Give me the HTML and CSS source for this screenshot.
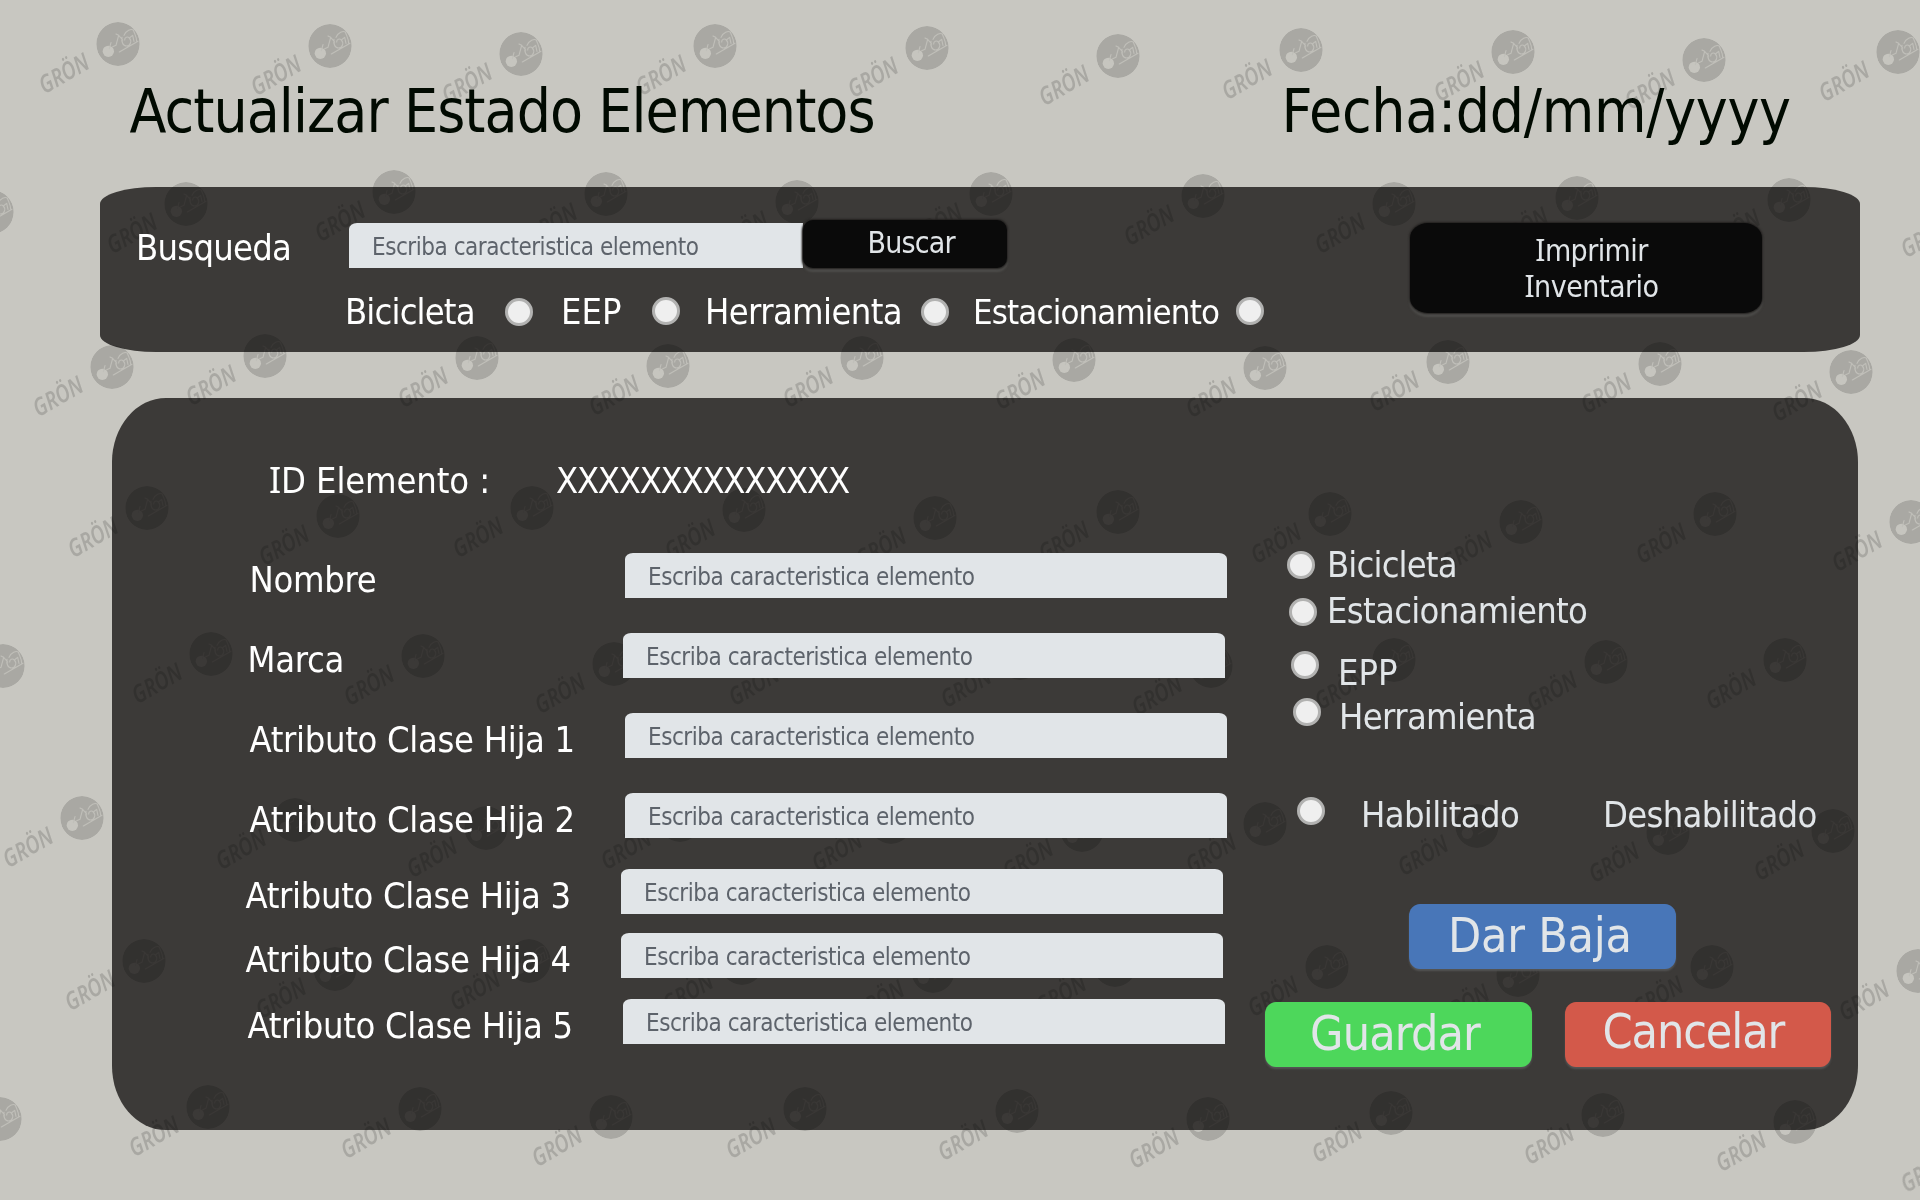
FILE: index.html
```
<!DOCTYPE html>
<html lang="es">
<head>
<meta charset="utf-8">
<title>Actualizar Estado Elementos</title>
<link rel="stylesheet" href="styles.css">
</head>
<body>
<div class="page">

  <svg class="watermark" width="1920" height="1200" viewBox="0 0 1920 1200" aria-hidden="true">
    <defs>
      <mask id="bike" maskUnits="userSpaceOnUse" x="-24" y="-24" width="48" height="48">
        <ellipse rx="21.7" ry="22" fill="#fff"/>
        <g transform="scale(.333)" fill="none" stroke="#444" stroke-width="3.4" stroke-linecap="round" stroke-linejoin="round">
          <circle cx="-29" cy="22" r="17" fill="#111" stroke="none"/>
          <path d="M-26 14L-21-4M-16 8L-6 4L2-26L-6-30M2-26L14-12M12-20C10-8 14 6 26 6C38 6 42-10 34-18C28-24 20-20 20-12M18-26C24-42 40-46 46-42M46-42C50-30 56-22 56-8M34-18L44-26L48-8M4 24L60-8"/>
        </g>
      </mask>
      <g id="mark">
        <g mask="url(#bike)"><ellipse rx="21.7" ry="22"/></g>
        <text class="mark-name" transform="translate(-73.5 50.5) rotate(-30) skewX(-2)" textLength="54" lengthAdjust="spacingAndGlyphs">GRÖN</text>
      </g>
    </defs>
    <g class="marks">
      <use href="#mark" x="118" y="44"/><use href="#mark" x="330" y="46"/><use href="#mark" x="521" y="54"/><use href="#mark" x="715" y="46"/><use href="#mark" x="927" y="48"/><use href="#mark" x="1118" y="56"/><use href="#mark" x="1301" y="50"/><use href="#mark" x="1513" y="52"/><use href="#mark" x="1704" y="60"/><use href="#mark" x="1898" y="52"/>
      <use href="#mark" x="-8" y="212"/><use href="#mark" x="186" y="204"/><use href="#mark" x="394" y="192"/><use href="#mark" x="606" y="194"/><use href="#mark" x="797" y="202"/><use href="#mark" x="991" y="194"/><use href="#mark" x="1203" y="196"/><use href="#mark" x="1394" y="204"/><use href="#mark" x="1577" y="198"/><use href="#mark" x="1789" y="200"/><use href="#mark" x="1980" y="208"/>
      <use href="#mark" x="112" y="367"/><use href="#mark" x="265" y="356"/><use href="#mark" x="477" y="358"/><use href="#mark" x="668" y="366"/><use href="#mark" x="862" y="358"/><use href="#mark" x="1074" y="360"/><use href="#mark" x="1265" y="368"/><use href="#mark" x="1448" y="362"/><use href="#mark" x="1660" y="364"/><use href="#mark" x="1851" y="372"/>
      <use href="#mark" x="147" y="508"/><use href="#mark" x="338" y="516"/><use href="#mark" x="532" y="508"/><use href="#mark" x="744" y="510"/><use href="#mark" x="935" y="518"/><use href="#mark" x="1118" y="512"/><use href="#mark" x="1330" y="514"/><use href="#mark" x="1521" y="522"/><use href="#mark" x="1715" y="514"/><use href="#mark" x="1911" y="522"/>
      <use href="#mark" x="3" y="666"/><use href="#mark" x="211" y="654"/><use href="#mark" x="423" y="656"/><use href="#mark" x="614" y="664"/><use href="#mark" x="808" y="656"/><use href="#mark" x="1020" y="658"/><use href="#mark" x="1211" y="666"/><use href="#mark" x="1394" y="660"/><use href="#mark" x="1606" y="662"/><use href="#mark" x="1785" y="660"/>
      <use href="#mark" x="82" y="818"/><use href="#mark" x="295" y="820"/><use href="#mark" x="486" y="828"/><use href="#mark" x="680" y="820"/><use href="#mark" x="891" y="822"/><use href="#mark" x="1082" y="830"/><use href="#mark" x="1265" y="824"/><use href="#mark" x="1477" y="826"/><use href="#mark" x="1668" y="833"/><use href="#mark" x="1833" y="831"/>
      <use href="#mark" x="144" y="961"/><use href="#mark" x="335" y="969"/><use href="#mark" x="529" y="961"/><use href="#mark" x="742" y="963"/><use href="#mark" x="933" y="971"/><use href="#mark" x="1115" y="965"/><use href="#mark" x="1327" y="967"/><use href="#mark" x="1518" y="975"/><use href="#mark" x="1712" y="967"/><use href="#mark" x="1918" y="971"/>
      <use href="#mark" x="0" y="1119"/><use href="#mark" x="208" y="1107"/><use href="#mark" x="420" y="1109"/><use href="#mark" x="611" y="1117"/><use href="#mark" x="805" y="1109"/><use href="#mark" x="1017" y="1111"/><use href="#mark" x="1208" y="1119"/><use href="#mark" x="1391" y="1113"/><use href="#mark" x="1603" y="1115"/><use href="#mark" x="1795" y="1122"/><use href="#mark" x="1980" y="1143"/>
    </g>
  </svg>

  <header class="header">
    <h1 class="heading title">Actualizar Estado Elementos</h1>
    <div class="heading date">Fecha:dd/mm/yyyy</div>
  </header>

  <section class="panel search">
    <div class="label search-label">Busqueda</div>
    <div class="search-main">
      <div class="search-bar">
        <div class="field search-field">Escriba caracteristica elemento</div>
        <div class="dark-button find">Buscar</div>
      </div>
      <div class="filters">
        <span class="label bicicleta">Bicicleta</span><span class="radio low"></span>
        <span class="label eep">EEP</span><span class="radio"></span>
        <span class="label herramienta">Herramienta</span><span class="radio low"></span>
        <span class="label small-label">Estacionamiento</span><span class="radio"></span>
      </div>
    </div>
    <div class="dark-button print"><span class="imprimir"><span class="slab">I</span>mprimir</span><span class="inventario"><span class="slab">I</span>nventario</span></div>
  </section>

  <section class="panel editor">
    <div class="form">
      <div class="id-row">
        <span class="label id-label"><span class="slab">I</span>D Elemento :</span>
        <span class="label id-value">XXXXXXXXXXXXXX</span>
      </div>
      <div class="row offset-4"><span class="label nombre">Nombre</span><div class="field">Escriba caracteristica elemento</div></div>
      <div class="row offset-2 gap-35"><span class="label nombre">Marca</span><div class="field">Escriba caracteristica elemento</div></div>
      <div class="row offset-4 gap-35"><span class="label atributo">Atributo Clase Hija 1</span><div class="field">Escriba caracteristica elemento</div></div>
      <div class="row offset-4 gap-35"><span class="label atributo">Atributo Clase Hija 2</span><div class="field">Escriba caracteristica elemento</div></div>
      <div class="row gap-31"><span class="label atributo">Atributo Clase Hija 3</span><div class="field">Escriba caracteristica elemento</div></div>
      <div class="row gap-19"><span class="label atributo">Atributo Clase Hija 4</span><div class="field">Escriba caracteristica elemento</div></div>
      <div class="row offset-2 gap-21"><span class="label atributo">Atributo Clase Hija 5</span><div class="field">Escriba caracteristica elemento</div></div>
    </div>

    <div class="side">
      <div class="option option-bicicleta"><span class="radio"></span><span class="label bicicleta">Bicicleta</span></div>
      <div class="option option-estacionamiento"><span class="radio"></span><span class="label estacionamiento">Estacionamiento</span></div>
      <div class="option option-epp"><span class="radio"></span><span class="label eep">EPP</span></div>
      <div class="option option-herramienta"><span class="radio"></span><span class="label herramienta">Herramienta</span></div>
      <div class="option option-estado"><span class="radio"></span><span class="label habilitado">Habilitado</span><span class="label deshabilitado">Deshabilitado</span></div>
      <div class="button baja">Dar Baja</div>
      <div class="actions">
        <div class="button guardar">Guardar</div>
        <div class="button cancelar">Cancelar</div>
      </div>
    </div>
  </section>
</div>
</body>
</html>
```
FILE: styles.css
```
* { box-sizing: border-box; }

body {
  margin: 0;
  background: #c8c7c1;
  font-family: "DejaVu Sans Condensed", "DejaVu Sans", sans-serif;
  font-stretch: condensed;
}

.page {
  position: relative;
  width: 1920px;
  height: 1200px;
  overflow: hidden;
}

/* The watermark lies over the panels but under their controls. */
.watermark { position: absolute; inset: 0; z-index: 1; }
.marks { fill: #000; opacity: .155; }
.mark-name { font: italic 600 24.5px "Noto Sans", sans-serif; }

.header {
  position: relative;
  z-index: 2;
  display: flex;
  height: 187px;
  padding: 76px 0 0 129.5px;
}
.heading {
  margin: 0;
  font-size: 60px;
  font-weight: 400;
  line-height: 70px;
  color: #010a01;
  white-space: nowrap;
}
.title { width: 1152px; letter-spacing: -.93px; }
.date { letter-spacing: -.3px; }

.panel { display: flex; align-items: flex-start; background: #3c3a38; }
.panel > * { position: relative; z-index: 2; }

.search {
  width: 1760px;
  height: 165px;
  margin-left: 100px;
  padding-left: 36px;
  border-radius: 56px / 17px;
}
.search-label { width: 209px; margin-top: 40px; letter-spacing: -.75px; }
.search-main { width: 1065px; padding-top: 33px; }
.search-bar { display: flex; height: 71px; padding-left: 4px; }

.label {
  height: 40px;
  font-size: 36px;
  line-height: 42px;
  color: #fff;
  white-space: nowrap;
}
.slab { font-family: "Noto Sans", sans-serif; line-height: 1; }

.field {
  width: 601.5px;
  height: 45px;
  padding: 2px 0 0 23px;
  border-radius: 8px 8px 0 0 / 6px 6px 0 0;
  background: #e1e5e8;
  font-size: 24px;
  line-height: 45px;
  letter-spacing: -.47px;
  color: #5d636b;
  white-space: nowrap;
}
.search-field { width: 454px; margin-top: 3px; border-top-right-radius: 0; }

.dark-button {
  background: #0a0a0a;
  box-shadow: 0 0 2px 1px #22201f, 0 3px 2px 1px #4e4d4b;
  color: #e1e5e8;
  font-size: 30px;
  line-height: 36px;
}
.find {
  width: 204px;
  height: 48px;
  padding: 5px 0 0 64.5px;
  border-radius: 10px;
  letter-spacing: -.8px;
}
.print {
  display: flex;
  flex-direction: column;
  align-items: center;
  width: 352px;
  height: 90px;
  margin-top: 36px;
  padding: 10px 0 0 11px;
  border-radius: 18px / 15px;
}
.imprimir { letter-spacing: -.6px; }
.inventario { letter-spacing: -.5px; }

.filters { display: grid; grid-template-columns: 160px 56px 91px 53px 216px 52px 263px 28px; }
.bicicleta { letter-spacing: -.85px; }
.herramienta { letter-spacing: -.6px; }
.eep { letter-spacing: 0; }
.estacionamiento { letter-spacing: -.68px; }
.small-label { font-size: 34.5px; letter-spacing: -.87px; }

.radio {
  flex: none;
  width: 28px;
  height: 28px;
  margin-top: 6px;
  border: 3.5px solid #b2b2b1;
  border-radius: 50%;
  background: #efefef;
}
.radio.low { margin-top: 7px; }

.editor {
  width: 1746px;
  height: 732px;
  margin: 46px 0 0 112px;
  border-radius: 54px / 64px;
}
.form { width: 1153px; padding: 62px 0 0 133px; }
.id-row { display: flex; height: 93px; padding-left: 24px; }
.id-label { width: 287px; letter-spacing: -.12px; }
.id-value { letter-spacing: -1.27px; }

.row { display: grid; grid-template-columns: 376px 1fr; }
.row .label { margin-top: 6px; height: 39px; }
.offset-2 { margin-left: 2px; }
.offset-4 { margin-left: 4px; }
.gap-35 { margin-top: 35px; }
.gap-31 { margin-top: 31px; }
.gap-19 { margin-top: 19px; }
.gap-21 { margin-top: 21px; }
.nombre { padding-left: .5px; letter-spacing: -.3px; }
.atributo { padding-left: .5px; letter-spacing: -.32px; }

.side { padding-top: 146px; }
.option { display: flex; height: 40px; }
.option .label { color: #e1e5e8; }
.option-bicicleta { gap: 12px; padding-left: 22px; }
.option-bicicleta .radio { margin-top: 7px; }
.option-estacionamiento { gap: 10px; margin-top: 6px; padding-left: 24px; }
.option-estacionamiento .radio { margin-top: 8px; }
.option-epp { gap: 19px; margin-top: 22px; padding-left: 26px; }
.option-epp .radio { margin-top: -1px; }
.option-herramienta { gap: 18px; margin-top: 4px; padding-left: 28px; }
.option-herramienta .radio { margin-top: 2px; }
.option-estado { margin-top: 58px; padding-left: 32px; }
.option-estado .radio { margin-top: 3px; }
.habilitado { width: 242px; margin-left: 36px; letter-spacing: -.66px; }
.deshabilitado { letter-spacing: -.7px; }

.button {
  width: 266.5px;
  height: 65px;
  border-radius: 11px / 12px;
  box-shadow: 0 2px 2px #555;
  font-size: 48px;
  line-height: 63px;
  color: #e1e5e8;
  white-space: nowrap;
}
.baja { margin: 70px 0 33px 144px; padding-left: 39px; background: #4876b8; letter-spacing: -.25px; }
.actions { display: flex; gap: 33px; }
.guardar { padding-left: 45px; background: #4dd75b; letter-spacing: -.83px; }
.cancelar { padding-left: 38px; background: #d3594a; line-height: 59px; letter-spacing: -1.1px; }
```
